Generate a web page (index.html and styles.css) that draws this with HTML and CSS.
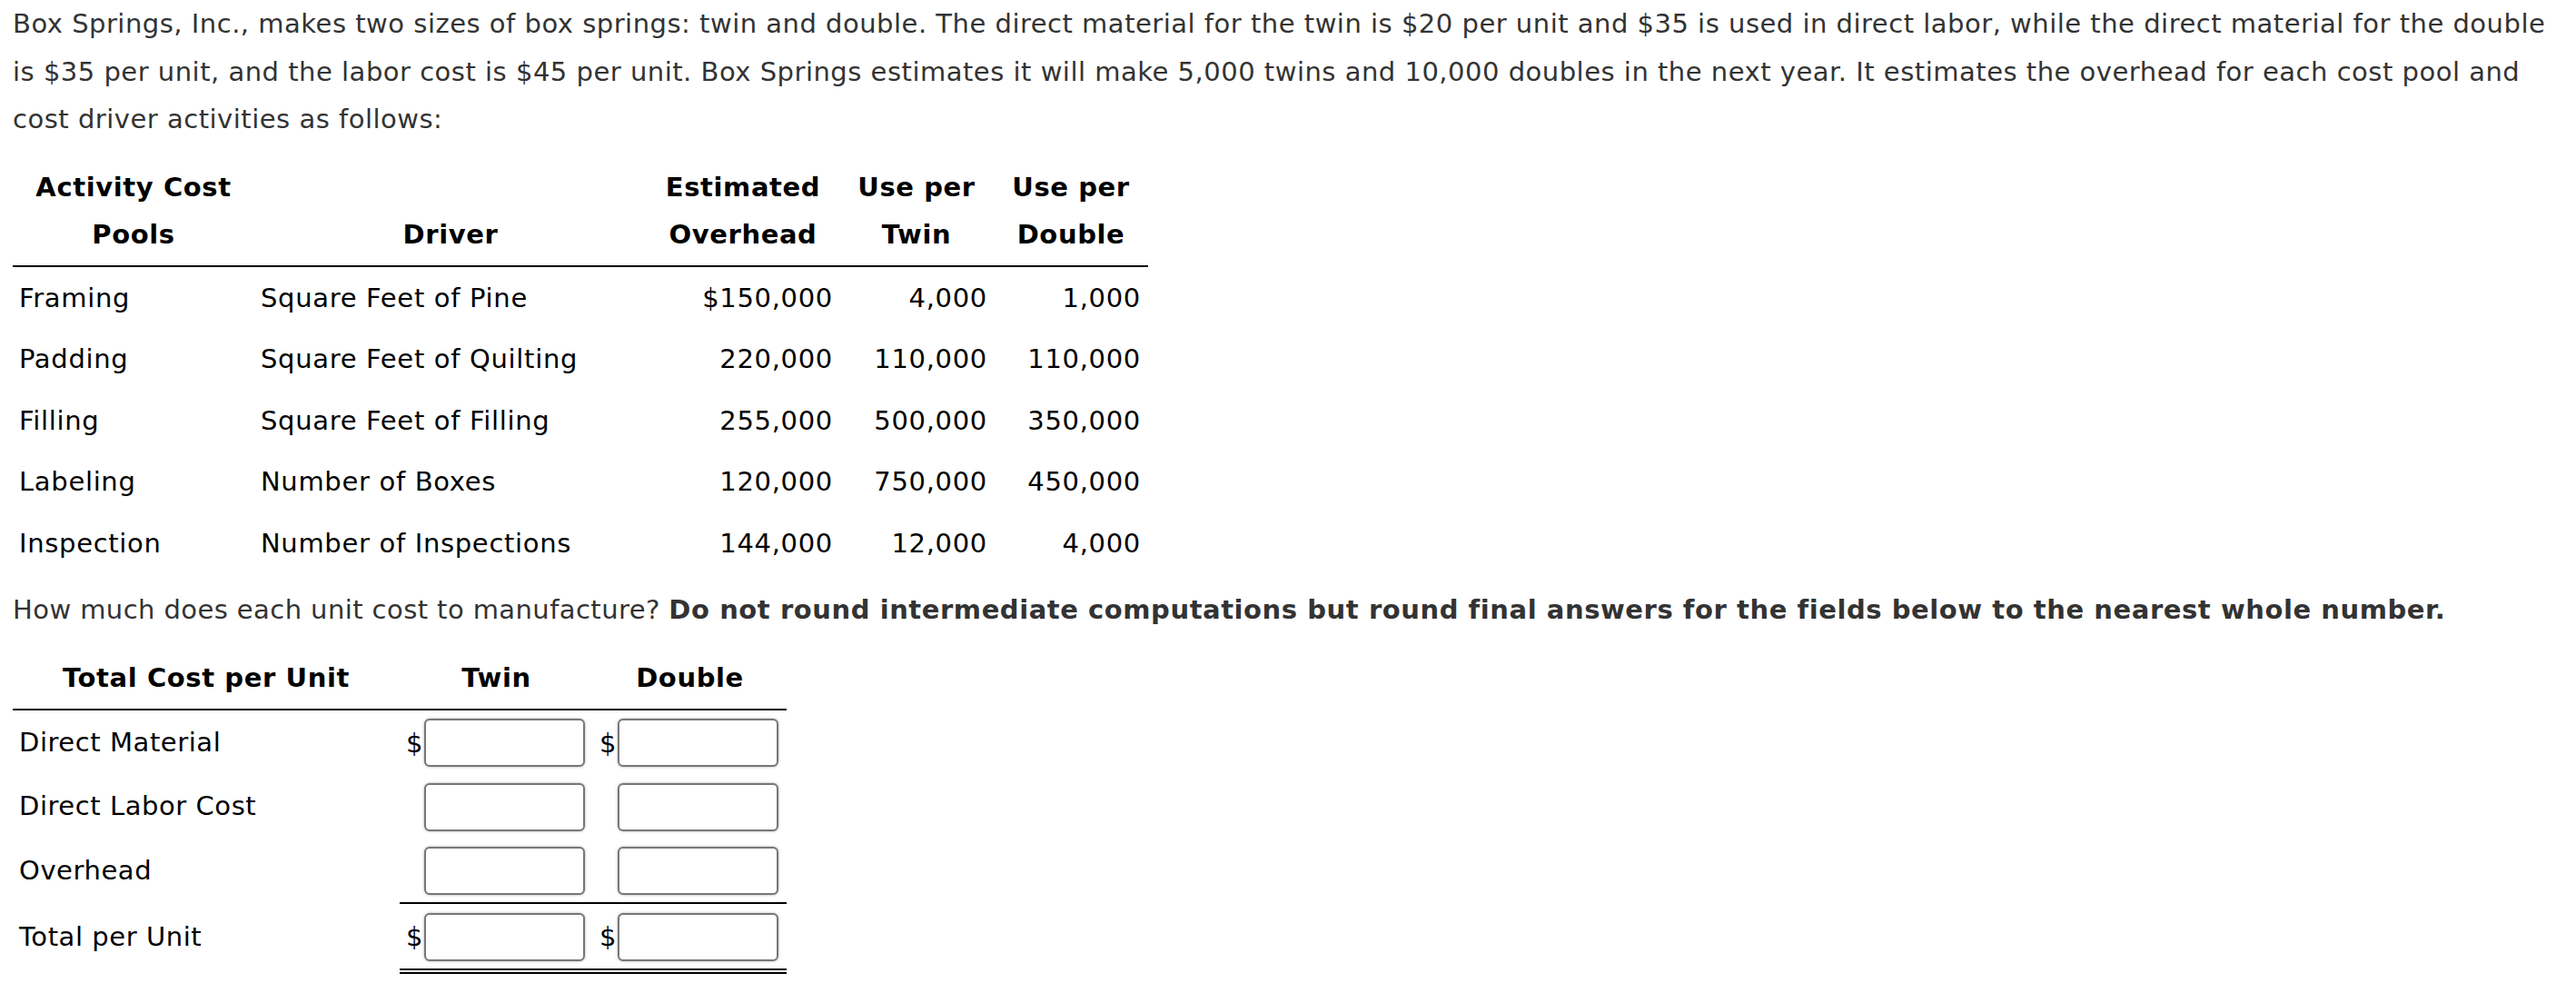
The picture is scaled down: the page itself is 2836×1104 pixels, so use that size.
FILE: index.html
```html
<!DOCTYPE html>
<html lang="en">
<head>
<meta charset="utf-8">
<title>Box Springs, Inc.</title>
<link rel="stylesheet" href="styles.css">
</head>
<body>
<div class="page">
  <p class="intro">Box Springs, Inc., makes two sizes of box springs: twin and double. The direct material for the twin is $20 per unit and $35 is used in direct labor, while the direct material for the double<br>is $35 per unit, and the labor cost is $45 per unit. Box Springs estimates it will make 5,000 twins and 10,000 doubles in the next year. It estimates the overhead for each cost pool and<br>cost driver activities as follows:</p>

  <table class="pools">
    <thead>
      <tr>
        <th class="c-pool">Activity Cost<br>Pools</th>
        <th class="c-driver">Driver</th>
        <th class="c-over">Estimated<br>Overhead</th>
        <th class="c-use">Use per<br>Twin</th>
        <th class="c-use">Use per<br>Double</th>
      </tr>
    </thead>
    <tbody>
      <tr><td>Framing</td><td>Square Feet of Pine</td><td class="num">$150,000</td><td class="num">4,000</td><td class="num">1,000</td></tr>
      <tr><td>Padding</td><td>Square Feet of Quilting</td><td class="num">220,000</td><td class="num">110,000</td><td class="num">110,000</td></tr>
      <tr><td>Filling</td><td>Square Feet of Filling</td><td class="num">255,000</td><td class="num">500,000</td><td class="num">350,000</td></tr>
      <tr><td>Labeling</td><td>Number of Boxes</td><td class="num">120,000</td><td class="num">750,000</td><td class="num">450,000</td></tr>
      <tr><td>Inspection</td><td>Number of Inspections</td><td class="num">144,000</td><td class="num">12,000</td><td class="num">4,000</td></tr>
    </tbody>
  </table>

  <p class="question">How much does each unit cost to manufacture? <strong>Do not round intermediate computations but round final answers for the fields below to the nearest whole number.</strong></p>

  <table class="answers">
    <thead>
      <tr>
        <th class="a-label">Total Cost per Unit</th>
        <th class="a-col">Twin</th>
        <th class="a-col">Double</th>
      </tr>
    </thead>
    <tbody>
      <tr>
        <td class="lbl">Direct Material</td>
        <td class="fld"><span class="cur">$</span><input class="box" type="text" aria-label="Direct Material Twin"></td>
        <td class="fld"><span class="cur">$</span><input class="box" type="text" aria-label="Direct Material Double"></td>
      </tr>
      <tr>
        <td class="lbl">Direct Labor Cost</td>
        <td class="fld"><span class="cur"></span><input class="box" type="text" aria-label="Direct Labor Cost Twin"></td>
        <td class="fld"><span class="cur"></span><input class="box" type="text" aria-label="Direct Labor Cost Double"></td>
      </tr>
      <tr>
        <td class="lbl">Overhead</td>
        <td class="fld"><span class="cur"></span><input class="box" type="text" aria-label="Overhead Twin"></td>
        <td class="fld"><span class="cur"></span><input class="box" type="text" aria-label="Overhead Double"></td>
      </tr>
      <tr class="total">
        <td class="lbl">Total per Unit</td>
        <td class="fld"><span class="cur">$</span><input class="box" type="text" aria-label="Total per Unit Twin"></td>
        <td class="fld"><span class="cur">$</span><input class="box" type="text" aria-label="Total per Unit Double"></td>
      </tr>
    </tbody>
  </table>
</div>
</body>
</html>
```

FILE: styles.css
```css
html, body {
  margin: 0;
  padding: 0;
  background: #fff;
}

body {
  font-family: "DejaVu Sans", Verdana, sans-serif;
  font-size: 29px;
  line-height: 52.5px;
  color: #333;
  letter-spacing: 0.5px;
}

.page {
  padding: 0 0 0 14px;
}

p {
  margin: 0;
  white-space: nowrap;
}

strong {
  letter-spacing: 0.56px;
}

.intro {
  margin-bottom: 14.5px;
}

.question {
  margin: 13.5px 0 14.5px;
  letter-spacing: 0.42px;
}

table {
  border-collapse: collapse;
  color: #000;
  font-size: 29px;
  line-height: 52.5px;
}

th, td {
  padding: 7.5px 7px;
}

th {
  font-weight: bold;
  text-align: center;
  vertical-align: bottom;
  border-bottom: 2px solid #000;
  letter-spacing: 0.6px;
}

td {
  text-align: left;
  vertical-align: middle;
  white-space: nowrap;
  letter-spacing: 0.68px;
}

td.num {
  text-align: right;
}

/* first table: 1250px wide */
.pools {
  width: 1250px;
  table-layout: fixed;
}

.c-pool { width: 252px; }
.c-driver { width: 418px; }
.c-over { width: 198px; }
.c-use { width: 156px; }

.pools td.num:last-child {
  padding-right: 8px;
}

/* answers table */
.answers {
  width: 852px;
  table-layout: fixed;
}

.a-label { width: 412px; }
.a-col { width: 199px; }

.answers td {
  padding: 8px 9px 8px 7px;
}

.answers td.lbl {
  padding-left: 7px;
  letter-spacing: 0.56px;
}

.cur {
  display: inline-block;
  width: 20px;
  vertical-align: middle;
  line-height: 40px;
  letter-spacing: 0;
}

.box {
  display: inline-block;
  vertical-align: middle;
  box-sizing: border-box;
  width: 177px;
  height: 53px;
  margin: 0;
  padding: 0 8px;
  border: 2px solid #777;
  border-radius: 6px;
  background: #fff;
  box-shadow: 0 0 3px rgba(0, 0, 0, 0.35);
  font: inherit;
}

.total td.fld {
  border-top: 2px solid #000;
  border-bottom: 6px double #000;
}
```
